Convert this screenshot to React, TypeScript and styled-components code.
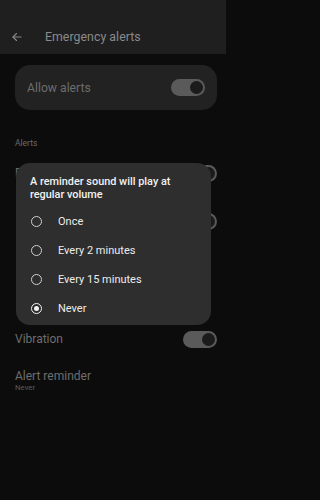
import React from "react";
import styled, { createGlobalStyle } from "styled-components";

const Global = createGlobalStyle`
  html, body { margin: 0; padding: 0; background: #0c0c0c; }
  body { font-family: Roboto, "Noto Sans", "Liberation Sans", sans-serif; }
  * { box-sizing: border-box; }
`;

const Page = styled.div`
  position: relative;
  width: 226px;
  height: 500px;
  overflow: hidden;
  background: #0c0c0c;
`;

const Header = styled.header`
  height: 54px;
  padding-top: 20px;
  background: #1f1f1f;
`;

const Toolbar = styled.div`
  height: 34px;
  display: flex;
  align-items: center;
  padding-left: 11px;
  gap: 22px;
`;

const Title = styled.h1`
  margin: 0;
  font-size: 12.3px;
  font-weight: 400;
  color: #8a8a8a;
  letter-spacing: 0.05px;
`;

const Content = styled.main`
  padding: 11px 9px 0 15px;
  display: flex;
  flex-direction: column;
`;

const Card = styled.div`
  height: 45px;
  border-radius: 15px;
  background: #222222;
  display: flex;
  align-items: center;
  justify-content: space-between;
  padding: 0 12px;
`;

const CardLabel = styled.span`
  font-size: 12.2px;
  color: #6c6c6c;
`;

const Section = styled.div`
  margin-top: 27px;
  line-height: 12px;
  font-size: 8.5px;
  color: #6a6a6a;
`;

const Row = styled.div<{ $h: number }>`
  height: ${(p) => p.$h}px;
  display: flex;
  align-items: center;
  justify-content: space-between;
`;

const RowText = styled.div`
  display: flex;
  flex-direction: column;
`;

const RowTitle = styled.span`
  font-size: 12px;
  line-height: 14px;
  color: #6e6e6e;
`;

const RowSub = styled.span`
  font-size: 7.8px;
  line-height: 10px;
  color: #5a5a5a;
`;

const ReminderBlock = styled.div`
  margin-top: 6px;
  display: flex;
  flex-direction: column;
`;

const Track = styled.div`
  width: 34px;
  height: 17px;
  border-radius: 9px;
  background: #5a5a5a;
  display: flex;
  align-items: center;
  justify-content: flex-end;
  padding-right: 2px;
  flex-shrink: 0;
`;

const Thumb = styled.div`
  width: 13px;
  height: 13px;
  border-radius: 50%;
  background: #1b1b1b;
`;

const Dialog = styled.div`
  position: absolute;
  left: 16px;
  top: 163px;
  width: 195px;
  height: 162px;
  border-radius: 14px;
  background: #2e2e2e;
  padding: 12px 14px 0 14px;
`;

const DialogTitle = styled.div`
  font-size: 10.9px;
  font-weight: 500;
  line-height: 13px;
  color: #f2f2f2;
`;

const Options = styled.div`
  margin-top: 6px;
  display: flex;
  flex-direction: column;
`;

const Option = styled.div`
  height: 29px;
  display: flex;
  align-items: center;
  gap: 16px;
  padding-left: 1px;
`;

const Radio = styled.div<{ $on?: boolean }>`
  width: 11px;
  height: 11px;
  border-radius: 50%;
  border: 1.4px solid ${(p) => (p.$on ? "#f4f4f4" : "#cfcfcf")};
  display: flex;
  align-items: center;
  justify-content: center;
  flex-shrink: 0;
  &::after {
    content: "";
    width: 5px;
    height: 5px;
    border-radius: 50%;
    background: ${(p) => (p.$on ? "#f4f4f4" : "transparent")};
  }
`;

const OptionLabel = styled.span`
  font-size: 11px;
  color: #ececec;
`;

const Toggle = () => (
  <Track>
    <Thumb />
  </Track>
);

const Back = () => (
  <svg width="12" height="12" viewBox="0 0 24 24" fill="none" stroke="#8a8a8a" strokeWidth="2.2" strokeLinecap="round" strokeLinejoin="round">
    <path d="M20 12H4" />
    <path d="M11 5l-7 7 7 7" />
  </svg>
);

const options = ["Once", "Every 2 minutes", "Every 15 minutes", "Never"];

export default function App() {
  return (
    <Page>
      <Global />
      <Header>
        <Toolbar>
          <Back />
          <Title>Emergency alerts</Title>
        </Toolbar>
      </Header>
      <Content>
        <Card>
          <CardLabel>Allow alerts</CardLabel>
          <Toggle />
        </Card>
        <Section>Alerts</Section>
        <Row $h={48}>
          <RowText>
            <RowTitle>Extreme threats</RowTitle>
          </RowText>
          <Toggle />
        </Row>
        <Row $h={48}>
          <RowText />
          <Toggle />
        </Row>
        <Row $h={70} />
        <Row $h={48}>
          <RowTitle>Vibration</RowTitle>
          <Toggle />
        </Row>
        <ReminderBlock>
          <RowTitle>Alert reminder</RowTitle>
          <RowSub>Never</RowSub>
        </ReminderBlock>
      </Content>
      <Dialog>
        <DialogTitle>
          A reminder sound will play at
          <br />
          regular volume
        </DialogTitle>
        <Options>
          {options.map((o) => (
            <Option key={o}>
              <Radio $on={o === "Never"} />
              <OptionLabel>{o}</OptionLabel>
            </Option>
          ))}
        </Options>
      </Dialog>
    </Page>
  );
}
